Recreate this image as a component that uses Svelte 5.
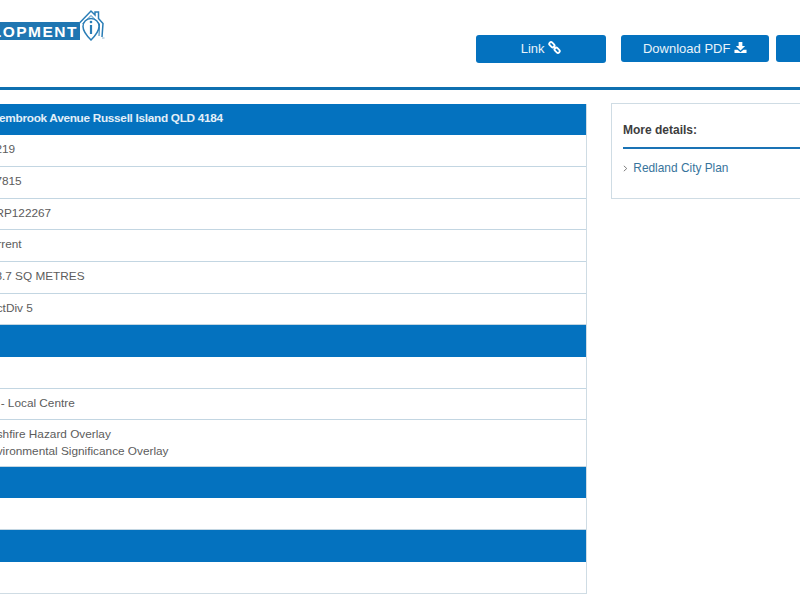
<script>
  const rows = [
    { head: true, text: '1 Pembrook Avenue Russell Island QLD 4184' },
    { text: '12219' },
    { text: '207815' },
    { text: '13RP122267' },
    { text: 'Current' },
    { text: '238.7 SQ METRES' },
    { text: 'SectDiv 5' },
    { head: true, text: '' },
    { text: '' },
    { text: 'LC - Local Centre' },
    { text: 'Bushfire Hazard Overlay', more: 'Environmental Significance Overlay', tall: true },
    { head: true, text: '' },
    { text: '' },
    { head: true, text: '' },
    { text: '' }
  ]
</script>

<div class="page">
  <header>
    <div class="logo">
      <span class="banner">DEVELOPMENT</span>
      <svg class="house" viewBox="0 0 28 32" width="28" height="32" fill="none" stroke="#2a7db6">
        <path d="M2 14.500 L14 2 L18 6 V3 H21.500 V9.500 L26 14.500 L25 28" stroke-width="1.500" />
        <path d="M5.500 15 L14 6.500 L22.500 15 L22 27" stroke-width="1" />
        <path d="M14 31 C9 26 6 22 6 17.500 A8 8 0 0 1 22 17.500 C22 22 19 26 14 31 Z" stroke-width="1.500" fill="#fff" />
        <circle cx="14" cy="13" r="1.300" fill="#2a7db6" stroke="none" />
        <path d="M14 16 V25" stroke-width="2.200" />
        <path d="M25 29 H27.500" stroke-width="1" stroke="#8fb6d2" />
      </svg>
    </div>
    <div class="actions">
      <button class="link">
        <span>Link</span>
        <svg viewBox="0 0 14 14" width="13" height="13" fill="none" stroke="#fff" stroke-width="2">
          <rect x="1" y="2.200" width="6.400" height="3.800" rx="1.900" transform="rotate(45 4.200 4.100)" />
          <rect x="6.600" y="8" width="6.400" height="3.800" rx="1.900" transform="rotate(45 9.800 9.900)" />
          <path d="M5.500 5.500 L8.500 8.500" stroke-width="1.600" />
        </svg>
      </button>
      <button class="pdf">
        Download PDF
        <svg viewBox="0 0 14 14" width="13" height="13" fill="#fff">
          <path d="M5 1 H9 V5.500 H12 L7 10.200 L2 5.500 H5 Z" />
          <path d="M0.500 9.500 H3.800 L7 12 L10.200 9.500 H13.500 V13 H0.500 Z" />
        </svg>
      </button>
      <button class="third"></button>
    </div>
  </header>

  <div class="content">
    <div class="details">
      {#each rows as row}
        <div class="row" class:head={row.head} class:tall={row.tall}>
          <div>
            {row.text}
            {#if row.more}<br />{row.more}{/if}
          </div>
        </div>
      {/each}
    </div>

    <aside>
      <h4>More details:</h4>
      <a href="#plan">
        <svg viewBox="0 0 6 8" width="5" height="7" fill="none" stroke="#666" stroke-width="1">
          <path d="M1 0.800 L4.500 4 L1 7.200" />
        </svg>
        Redland City Plan
      </a>
    </aside>
  </div>
</div>

<style>
  :global(body) {
    background: #fff;
    overflow: hidden;
  }

  .page {
    width: 1000px;
    margin-left: -40px;
    font-family: "Liberation Sans", Arial, sans-serif;
    font-size: 11.800px;
    color: #5c5c5c;
  }

  header {
    height: 87px;
    display: flex;
    border-bottom: 3px solid #0f70b0;
  }

  .logo {
    width: 516px;
    height: 87px;
    display: flex;
    align-items: flex-start;
    padding-top: 9px;
    box-sizing: border-box;
  }

  .banner {
    width: 120px;
    height: 18px;
    margin-top: 13px;
    background: #1f76b2;
    color: #fff;
    font-size: 15.500px;
    font-weight: bold;
    line-height: 19px;
    letter-spacing: 1.500px;
    padding-right: 2px;
    box-sizing: border-box;
    white-space: nowrap;
    direction: rtl;
    overflow: hidden;
  }

  .house {
    margin-left: -3px;
  }

  .actions {
    display: flex;
    padding-top: 35px;
  }

  button {
    height: 27px;
    border: none;
    border-radius: 3px;
    background: #0472bf;
    color: #e8f2fa;
    font-family: inherit;
    font-size: 13px;
    padding: 0;
  }

  button svg {
    vertical-align: -1px;
  }

  .link {
    width: 130px;
    height: 28px;
    padding-bottom: 1px;
  }

  .pdf {
    width: 148px;
    margin-left: 15px;
  }

  .third {
    width: 120px;
    margin-left: 7px;
  }

  .content {
    display: flex;
    align-items: flex-start;
    padding-top: 13.500px;
  }

  .details {
    width: 627px;
    border-right: 1px solid #cfdce4;
    border-bottom: 1px solid #cfdce4;
    box-sizing: border-box;
  }

  .row {
    min-height: 31.700px;
    display: flex;
    align-items: center;
    padding: 4.500px 0 5.500px 22.300px;
    border-bottom: 1px solid #c3d6e2;
    box-sizing: border-box;
    line-height: 17.600px;
  }

  .row:last-child {
    border-bottom: none;
  }

  .tall {
    padding-top: 5.500px;
    padding-bottom: 4.500px;
  }

  .head {
    background: #0472bf;
    border-bottom: none;
    color: #e3eff8;
    font-weight: bold;
    letter-spacing: -0.300px;
  }

  aside {
    width: 300px;
    height: 96px;
    margin-top: -0.500px;
    margin-left: 24px;
    padding: 0 11px;
    border: 1px solid #cfdce4;
    box-sizing: border-box;
  }

  h4 {
    margin: 19px 0 0;
    padding-bottom: 9px;
    border-bottom: 2px solid #1a73b5;
    font-size: 12px;
    line-height: 15px;
    color: #3d3d3d;
  }

  aside a {
    display: block;
    margin-top: 11px;
    color: #37749c;
    text-decoration: none;
    line-height: 16px;
    font-size: 11.900px;
  }

  aside a svg {
    margin-right: 2px;
  }
</style>
